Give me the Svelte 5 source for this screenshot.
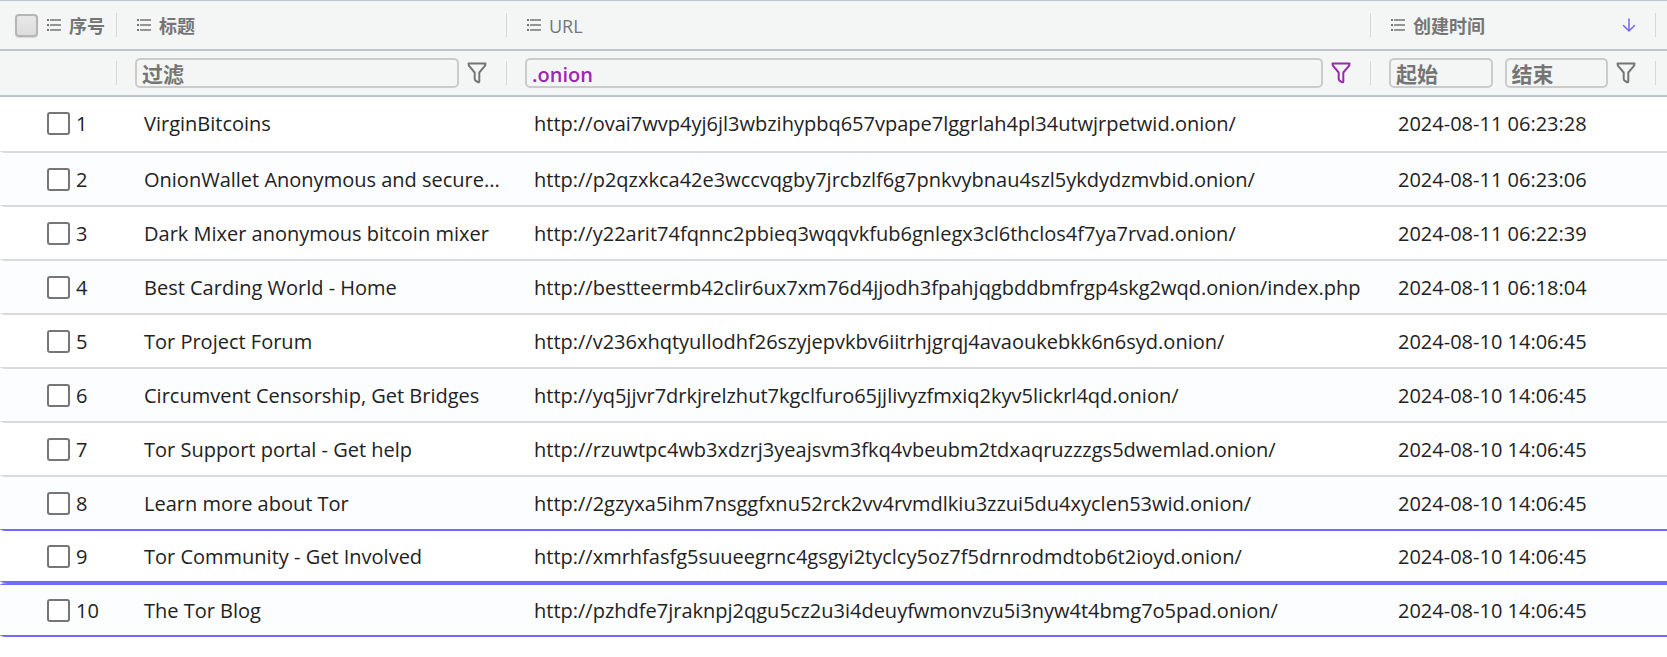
<script>
    let filters = $state({ title: '', url: '.onion', from: '', to: '' });

    let rows = $state([
        { title: 'VirginBitcoins', url: 'http://ovai7wvp4yj6jl3wbzihypbq657vpape7lggrlah4pl34utwjrpetwid.onion/', created: '2024-08-11 06:23:28' },
        { title: 'OnionWallet Anonymous and secure...', url: 'http://p2qzxkca42e3wccvqgby7jrcbzlf6g7pnkvybnau4szl5ykdydzmvbid.onion/', created: '2024-08-11 06:23:06' },
        { title: 'Dark Mixer anonymous bitcoin mixer', url: 'http://y22arit74fqnnc2pbieq3wqqvkfub6gnlegx3cl6thclos4f7ya7rvad.onion/', created: '2024-08-11 06:22:39' },
        { title: 'Best Carding World - Home', url: 'http://bestteermb42clir6ux7xm76d4jjodh3fpahjqgbddbmfrgp4skg2wqd.onion/index.php', created: '2024-08-11 06:18:04' },
        { title: 'Tor Project Forum', url: 'http://v236xhqtyullodhf26szyjepvkbv6iitrhjgrqj4avaoukebkk6n6syd.onion/', created: '2024-08-10 14:06:45' },
        { title: 'Circumvent Censorship, Get Bridges', url: 'http://yq5jjvr7drkjrelzhut7kgclfuro65jjlivyzfmxiq2kyv5lickrl4qd.onion/', created: '2024-08-10 14:06:45' },
        { title: 'Tor Support portal - Get help', url: 'http://rzuwtpc4wb3xdzrj3yeajsvm3fkq4vbeubm2tdxaqruzzzgs5dwemlad.onion/', created: '2024-08-10 14:06:45' },
        { title: 'Learn more about Tor', url: 'http://2gzyxa5ihm7nsggfxnu52rck2vv4rvmdlkiu3zzui5du4xyclen53wid.onion/', created: '2024-08-10 14:06:45', edge: true },
        { title: 'Tor Community - Get Involved', url: 'http://xmrhfasfg5suueegrnc4gsgyi2tyclcy5oz7f5drnrodmdtob6t2ioyd.onion/', created: '2024-08-10 14:06:45', edge: true },
        { title: 'The Tor Blog', url: 'http://pzhdfe7jraknpj2qgu5cz2u3i4deuyfwmonvzu5i3nyw4t4bmg7o5pad.onion/', created: '2024-08-10 14:06:45', edge: true, top: true }
    ]);

    let checked = $state([]);

    function toggleAll(e) {
        checked = e.currentTarget.checked ? rows.map((_, i) => i) : [];
    }
</script>

{#snippet listIcon()}
    <svg class="list-icon" viewBox="0 0 16 14" aria-hidden="true">
        <path d="M1 2h2M1 7h2M1 12h2" stroke-width="2" />
        <path d="M4 2h11M4 7h11M4 12h11" stroke-width="1.5" />
    </svg>
{/snippet}

{#snippet filterButton(label, active)}
    <button class="filter-button" class:active aria-label={label}>
        <svg viewBox="0 0 20 22" aria-hidden="true">
            <path d="M1.5 1.5h17c0 1.4-.3 2.200-1.200 3.200l-5 5.800v9c0 .8-.8 1.100-1.500.6l-2.200-1.500c-.6-.4-.9-.8-.9-1.500v-6.600l-5-5.800C1.800 3.700 1.500 2.900 1.500 1.500z" />
        </svg>
    </button>
{/snippet}

<table>
    <thead>
        <tr class="head">
            <th>
                <div class="cell index">
                    <input class="check-all" type="checkbox" aria-label="全选" onchange={toggleAll} />
                    {@render listIcon()}
                    <span>序号</span>
                </div>
            </th>
            <th><div class="cell">{@render listIcon()}<span>标题</span></div></th>
            <th><div class="cell url">{@render listIcon()}<span>URL</span></div></th>
            <th>
                <div class="cell">
                    {@render listIcon()}<span>创建时间</span>
                    <button class="sort" aria-label="降序">
                        <svg viewBox="0 0 14 14" aria-hidden="true"><path d="M7 1v12M1.500 7.500l5.500 5.500 5.500-5.500" /></svg>
                    </button>
                </div>
            </th>
            <th aria-hidden="true"></th>
        </tr>
        <tr class="head filters">
            <th><div class="cell"></div></th>
            <th>
                <div class="cell">
                    <input type="text" placeholder="过滤" aria-label="标题过滤" bind:value={filters.title} />
                    {@render filterButton('标题过滤选项', false)}
                </div>
            </th>
            <th>
                <div class="cell">
                    <input type="text" placeholder="过滤" aria-label="URL过滤" bind:value={filters.url} />
                    {@render filterButton('URL过滤选项', true)}
                </div>
            </th>
            <th>
                <div class="cell">
                    <div class="range">
                        <input type="text" placeholder="起始" aria-label="起始时间" bind:value={filters.from} />
                        <input type="text" placeholder="结束" aria-label="结束时间" bind:value={filters.to} />
                    </div>
                    {@render filterButton('时间过滤选项', false)}
                </div>
            </th>
            <th aria-hidden="true"></th>
        </tr>
    </thead>
    <tbody>
        {#each rows as row, i}
            <tr class="row" class:edge={row.edge} class:top={row.top}>
                <td class="number">
                    <label><input type="checkbox" value={i} bind:group={checked} />{i + 1}</label>
                </td>
                <td>{row.title}</td>
                <td>{row.url}</td>
                <td>{row.created}</td>
            </tr>
        {/each}
    </tbody>
</table>

<style>
    :global(body) {
        background: #fff;
    }

    table,
    thead,
    tbody {
        display: block;
    }

    table {
        font-family: 'Open Sans', 'Noto Sans CJK SC', sans-serif;
        font-size: 20px;
        font-weight: 400;
        line-height: 28px;
        color: #222;
    }

    tr {
        display: grid;
        grid-template-columns: 117px 390px minmax(0, 1fr) 285px 11px;
        align-items: center;
    }

    th,
    td {
        padding: 0;
        min-width: 0;
    }

    .head {
        box-sizing: border-box;
        height: 50px;
        background: #f4f6f6;
        border-bottom: 2px solid #bcc3c9;
        color: #757575;
    }

    .head:first-child {
        height: 51px;
        border-top: 1px solid #bcc3c9;
    }

    .head.filters {
        height: 46px;
    }

    .cell {
        display: flex;
        align-items: center;
        gap: 7px;
        box-sizing: border-box;
        height: 24px;
        padding: 0 19px;
        border-right: 1px solid #d6d9dc;
        font-size: 18px;
        font-weight: 700;
        line-height: 24px;
        white-space: nowrap;
    }

    .cell span {
        padding-top: 1px;
    }

    .filters .cell {
        gap: 8px;
        padding-left: 18px;
    }

    .cell.index {
        padding: 0 0 0 15px;
    }

    .cell.url {
        font-weight: 400;
    }

    .list-icon {
        flex: none;
        width: 16px;
        height: 14px;
        stroke: #757575;
        fill: none;
    }

    .check-all {
        appearance: none;
        flex: none;
        box-sizing: border-box;
        width: 23px;
        height: 23px;
        margin: 0 1px 0 0;
        border: 2px solid #b5b5b5;
        border-radius: 4px;
        background: linear-gradient(#e8e8e8, #dcdcdc);
        box-shadow: 0 1px 1px #d8d8d8;
    }

    .check-all:checked {
        background: #6f6bff;
    }

    button {
        display: flex;
        padding: 0;
        border: none;
        background: none;
        cursor: pointer;
    }

    button svg {
        fill: none;
        stroke: currentColor;
        stroke-width: 2;
        stroke-linejoin: round;
        stroke-linecap: round;
    }

    .sort {
        margin-left: auto;
        color: #7466f5;
    }

    .sort svg {
        width: 14px;
        height: 14px;
        stroke-width: 1.5;
    }

    .filter-button {
        flex: none;
        color: #757575;
    }

    .filter-button.active {
        color: #9c27b0;
    }

    .filter-button svg {
        width: 20px;
        height: 22px;
    }

    input[type='text'] {
        flex: 1;
        box-sizing: border-box;
        width: 100%;
        min-width: 0;
        height: 30px;
        padding: 2px 5px 0;
        border: 2px solid #cacccc;
        border-radius: 5px;
        outline: none;
        background: transparent;
        color: #9c27b0;
        font: 600 20px/24px 'Open Sans', 'Noto Sans CJK SC', sans-serif;
    }

    input::placeholder {
        color: #757575;
        font-size: 21px;
        font-weight: 700;
    }

    .range {
        display: flex;
        flex: 1;
        gap: 12px;
        min-width: 0;
    }

    .row {
        height: 52px;
        border-bottom: 2px solid #d8dade;
        border-radius: 8px 0 0 8px / 2px 0 0 2px;
    }

    .row:first-child {
        height: 54px;
    }

    .row:nth-child(even) {
        background: #fcfdff;
    }

    .row.edge {
        border-color: #6f6bff;
    }

    .row.top {
        height: 50px;
        border-top: 2px solid #6f6bff;
    }

    .row.edge:nth-last-child(2) {
        height: 50px;
    }

    td {
        padding: 2px 0 0 27px;
        overflow: hidden;
        text-overflow: ellipsis;
        white-space: nowrap;
    }

    .row:first-child td {
        padding-top: 0;
    }

    td.number {
        padding-left: 47px;
    }

    label {
        display: flex;
        align-items: center;
        gap: 6px;
    }

    label input {
        appearance: none;
        box-sizing: border-box;
        width: 23px;
        height: 23px;
        margin: 0 0 2px;
        border: 2px solid #767676;
        border-radius: 3px;
        background: #fff;
    }

    label input:checked {
        background: #6f6bff;
    }
</style>
